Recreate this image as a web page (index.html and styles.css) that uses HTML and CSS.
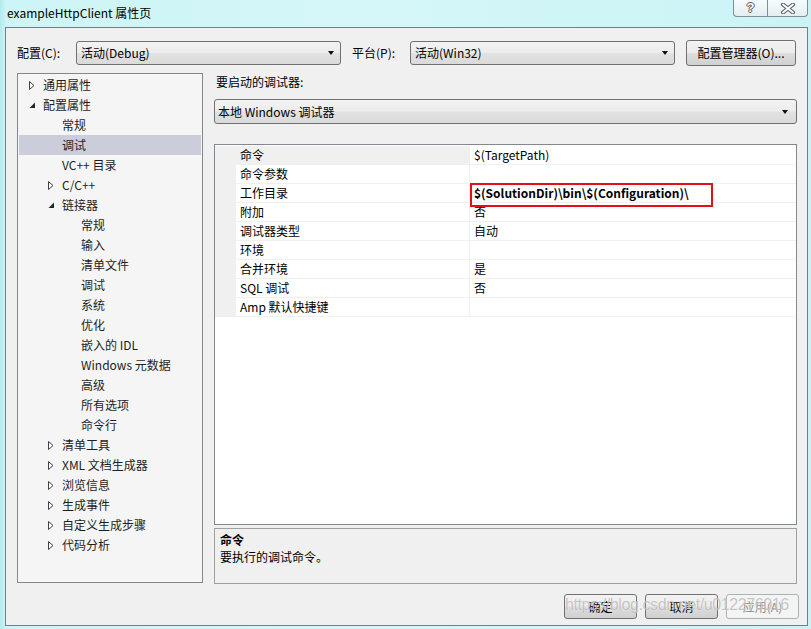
FILE: index.html
```html
<!DOCTYPE html>
<html lang="zh-CN">
<head>
<meta charset="utf-8">
<title>exampleHttpClient 属性页</title>
<link rel="stylesheet" href="styles.css">
</head>
<body>
<div class="window">
  <div class="titlebar">
    <span class="title">exampleHttpClient 属性页</span>
    <div class="caption-btns">
      <div class="cap help"><span class="qmark">?</span></div>
      <div class="cap close">
        <svg width="14" height="11" viewBox="0 0 14 11">
          <path d="M2 1.5 L12 9.5 M12 1.5 L2 9.5" stroke="#5a5f63" stroke-width="4" stroke-linecap="round"/>
          <path d="M2 1.5 L12 9.5 M12 1.5 L2 9.5" stroke="#ffffff" stroke-width="2" stroke-linecap="round"/>
        </svg>
      </div>
    </div>
  </div>

  <div class="client">
    <div class="toprow">
      <span class="lbl lbl-cfg">配置(C):</span>
      <div class="combo combo-top"><span class="combo-text">活动(Debug)</span><span class="arrow"></span></div>
      <span class="lbl lbl-plat">平台(P):</span>
      <div class="combo combo-top"><span class="combo-text">活动(Win32)</span><span class="arrow"></span></div>
      <button class="btn btn-mgr">配置管理器(O)...</button>
    </div>

    <div class="main">
      <div class="tree">
        <div class="node l1"><span class="tw"><svg width="6" height="9" viewBox="0 0 6 9"><polygon points="0.5,0.5 5,4.5 0.5,8.5" fill="#fff" stroke="#404040"/></svg></span>通用属性</div>
        <div class="node l1"><span class="tw"><svg width="7" height="7" viewBox="0 0 7 7"><polygon points="6,0.5 6,6 0.5,6" fill="#262626"/></svg></span>配置属性</div>
        <div class="node l2"><span class="tw"></span>常规</div>
        <div class="node l2 selected"><span class="tw"></span>调试</div>
        <div class="node l2"><span class="tw"></span>VC++ 目录</div>
        <div class="node l2"><span class="tw"><svg width="6" height="9" viewBox="0 0 6 9"><polygon points="0.5,0.5 5,4.5 0.5,8.5" fill="#fff" stroke="#404040"/></svg></span>C/C++</div>
        <div class="node l2"><span class="tw"><svg width="7" height="7" viewBox="0 0 7 7"><polygon points="6,0.5 6,6 0.5,6" fill="#262626"/></svg></span>链接器</div>
        <div class="node l3"><span class="tw"></span>常规</div>
        <div class="node l3"><span class="tw"></span>输入</div>
        <div class="node l3"><span class="tw"></span>清单文件</div>
        <div class="node l3"><span class="tw"></span>调试</div>
        <div class="node l3"><span class="tw"></span>系统</div>
        <div class="node l3"><span class="tw"></span>优化</div>
        <div class="node l3"><span class="tw"></span>嵌入的 IDL</div>
        <div class="node l3"><span class="tw"></span>Windows 元数据</div>
        <div class="node l3"><span class="tw"></span>高级</div>
        <div class="node l3"><span class="tw"></span>所有选项</div>
        <div class="node l3"><span class="tw"></span>命令行</div>
        <div class="node l2"><span class="tw"><svg width="6" height="9" viewBox="0 0 6 9"><polygon points="0.5,0.5 5,4.5 0.5,8.5" fill="#fff" stroke="#404040"/></svg></span>清单工具</div>
        <div class="node l2"><span class="tw"><svg width="6" height="9" viewBox="0 0 6 9"><polygon points="0.5,0.5 5,4.5 0.5,8.5" fill="#fff" stroke="#404040"/></svg></span>XML 文档生成器</div>
        <div class="node l2"><span class="tw"><svg width="6" height="9" viewBox="0 0 6 9"><polygon points="0.5,0.5 5,4.5 0.5,8.5" fill="#fff" stroke="#404040"/></svg></span>浏览信息</div>
        <div class="node l2"><span class="tw"><svg width="6" height="9" viewBox="0 0 6 9"><polygon points="0.5,0.5 5,4.5 0.5,8.5" fill="#fff" stroke="#404040"/></svg></span>生成事件</div>
        <div class="node l2"><span class="tw"><svg width="6" height="9" viewBox="0 0 6 9"><polygon points="0.5,0.5 5,4.5 0.5,8.5" fill="#fff" stroke="#404040"/></svg></span>自定义生成步骤</div>
        <div class="node l2"><span class="tw"><svg width="6" height="9" viewBox="0 0 6 9"><polygon points="0.5,0.5 5,4.5 0.5,8.5" fill="#fff" stroke="#404040"/></svg></span>代码分析</div>
      </div>

      <div class="right">
        <div class="section-label">要启动的调试器:</div>
        <div class="combo combo-wide"><span class="combo-text">本地 Windows 调试器</span><span class="arrow"></span></div>

        <div class="grid">
          <div class="row"><span class="strip"></span><span class="name sel">命令</span><span class="value">$(TargetPath)</span></div>
          <div class="row"><span class="strip"></span><span class="name">命令参数</span><span class="value"></span></div>
          <div class="row"><span class="strip"></span><span class="name">工作目录</span><span class="value bold">$(SolutionDir)\bin\$(Configuration)\<span class="redbox"></span></span></div>
          <div class="row"><span class="strip"></span><span class="name">附加</span><span class="value">否</span></div>
          <div class="row"><span class="strip"></span><span class="name">调试器类型</span><span class="value">自动</span></div>
          <div class="row"><span class="strip"></span><span class="name">环境</span><span class="value"></span></div>
          <div class="row"><span class="strip"></span><span class="name">合并环境</span><span class="value">是</span></div>
          <div class="row"><span class="strip"></span><span class="name">SQL 调试</span><span class="value">否</span></div>
          <div class="row"><span class="strip"></span><span class="name">Amp 默认快捷键</span><span class="value"></span></div>
        </div>

        <div class="desc">
          <div class="desc-title">命令</div>
          <div class="desc-text">要执行的调试命令。</div>
        </div>
      </div>
    </div>

    <div class="buttons">
      <button class="btn btn-dlg">确定</button>
      <button class="btn btn-dlg">取消</button>
      <button class="btn btn-dlg disabled">应用(A)</button>
    </div>
  </div>

  <div class="watermark">https://blog.csdn.net/u012276016</div>
</div>
</body>
</html>
```

FILE: styles.css
```css
* { box-sizing: border-box; }

body {
  margin: 0;
  width: 811px;
  height: 629px;
  overflow: hidden;
  background: linear-gradient(90deg, #b3eaee 0px, #cdf4f6 6px, #d5f7f9 45%, #cbf3f5 100%);
  font-family: "Noto Sans CJK SC", "Noto Sans", sans-serif;
  font-size: 12px;
  color: #000;
}

.window {
  position: relative;
  width: 811px;
  height: 629px;
  display: flex;
  flex-direction: column;
}

/* title bar */
.titlebar {
  height: 27px;
  flex: none;
  display: flex;
  justify-content: space-between;
  align-items: flex-start;
}
.title {
  padding-left: 7px;
  line-height: 26px;
  font-size: 12px;
  color: #000;
}
.caption-btns {
  display: flex;
  margin-right: 3px;
}
.cap {
  height: 17px;
  border: 1px solid #7f8e98;
  border-top: none;
  background: linear-gradient(#f6fcfd, #e3eef1);
  display: flex;
  align-items: center;
  justify-content: center;
}
.help {
  width: 34px;
  border-right: none;
  border-radius: 0 0 0 4px;
}
.close {
  width: 41px;
  border-radius: 0 0 4px 0;
}
.qmark {
  font-family: "Liberation Sans", sans-serif;
  font-weight: bold;
  font-size: 13px;
  line-height: 14px;
  color: #fff;
  text-shadow: 1px 0 0 #555, -1px 0 0 #555, 0 1px 0 #555, 0 -1px 0 #555;
}

/* client area */
.client {
  flex: 1;
  margin: 0 3px 3px 5px;
  border: 1px solid #717f87;
  background: #f0f0f0;
  display: flex;
  flex-direction: column;
}

.toprow {
  margin-top: 12px;
  height: 26px;
  padding-left: 11px;
  display: flex;
  align-items: center;
}
.lbl {
  line-height: 16px;
}
.lbl-cfg { width: 59px; }
.lbl-plat { width: 58px; margin-left: 11px; }

.combo {
  height: 24px;
  border: 1px solid #707070;
  border-radius: 3px;
  background: linear-gradient(#f3f3f3 0%, #ececec 48%, #e2e2e2 52%, #dadada 100%);
  display: flex;
  align-items: center;
  justify-content: space-between;
  padding: 0 4px 0 4px;
}
.combo-top { width: 265px; }
.combo-text { line-height: 16px; }
.arrow {
  width: 0;
  height: 0;
  border-left: 3.5px solid transparent;
  border-right: 3.5px solid transparent;
  border-top: 4px solid #111;
  margin-right: 2px;
}

.btn {
  font-family: inherit;
  font-size: 12px;
  color: #000;
  border: 1px solid #707070;
  border-radius: 3px;
  background: linear-gradient(#f3f3f3 0%, #ebebeb 48%, #dddddd 52%, #d0d0d0 100%);
  padding: 0;
  line-height: 16px;
}
.btn-mgr {
  width: 110px;
  height: 26px;
  margin-left: 11px;
}

/* main */
.main {
  margin-top: 7px;
  padding-left: 11px;
  display: flex;
  gap: 11px;
}

.tree {
  width: 186px;
  height: 510px;
  border: 1px solid #828790;
  background: #f5f5f5;
  padding-top: 1px;
}
.node {
  height: 20px;
  line-height: 20px;
  margin: 0 1px;
  display: flex;
  align-items: center;
  color: #1e1e1e;
  white-space: nowrap;
}
.node.l1 { padding-left: 10px; }
.node.l2 { padding-left: 29px; }
.node.l3 { padding-left: 48px; }
.node.selected { background: #cccdda; }
.tw {
  width: 14px;
  flex: none;
  display: flex;
  align-items: center;
}
.tw svg { display: block; }

.right {
  width: 583px;
  display: flex;
  flex-direction: column;
}
.section-label {
  margin-top: 1px;
  line-height: 16px;
  padding-left: 2px;
}
.combo-wide {
  margin-top: 9px;
  height: 25px;
  padding-left: 3px;
  padding-right: 6px;
}

.grid {
  margin-top: 20px;
  height: 381px;
  border: 1px solid #828790;
  background: #fff;
  padding-top: 1px;
}
.row {
  display: flex;
  height: 19px;
}
.strip {
  width: 21px;
  flex: none;
  background: #f0f0f0;
}
.name {
  width: 234px;
  flex: none;
  border-right: 1px solid #f0f0f0;
  border-bottom: 1px solid #f0f0f0;
  padding-left: 4px;
  line-height: 18px;
  white-space: nowrap;
}
.name.sel { background: #f0f0f0; }
.value {
  flex: 1;
  position: relative;
  border-bottom: 1px solid #f0f0f0;
  padding-left: 4px;
  line-height: 18px;
  white-space: nowrap;
}
.value.bold { font-weight: bold; }
.redbox {
  position: absolute;
  left: 0;
  top: -1px;
  width: 243px;
  height: 24px;
  border: 2px solid #e3101c;
}

.desc {
  margin-top: 3px;
  height: 56px;
  border: 1px solid #a0a0a0;
  background: #f0f0f0;
  padding: 3px 0 0 5px;
}
.desc-title {
  font-weight: bold;
  line-height: 16px;
}
.desc-text {
  line-height: 18px;
}

/* bottom buttons */
.buttons {
  margin-top: 10px;
  padding-right: 8px;
  display: flex;
  justify-content: flex-end;
  gap: 8px;
}
.btn-dlg {
  width: 73px;
  height: 25px;
}
.btn-dlg.disabled {
  color: #8a8a8a;
  border-color: #adb2b5;
  background: #f4f4f4;
}

.watermark {
  position: absolute;
  left: 565px;
  top: 596px;
  font-family: "Liberation Sans", sans-serif;
  font-size: 16px;
  letter-spacing: -0.4px;
  color: rgba(140, 140, 140, 0.5);
  text-shadow: 0 0 1px rgba(255, 255, 255, 0.9);
  white-space: nowrap;
  pointer-events: none;
}
```
